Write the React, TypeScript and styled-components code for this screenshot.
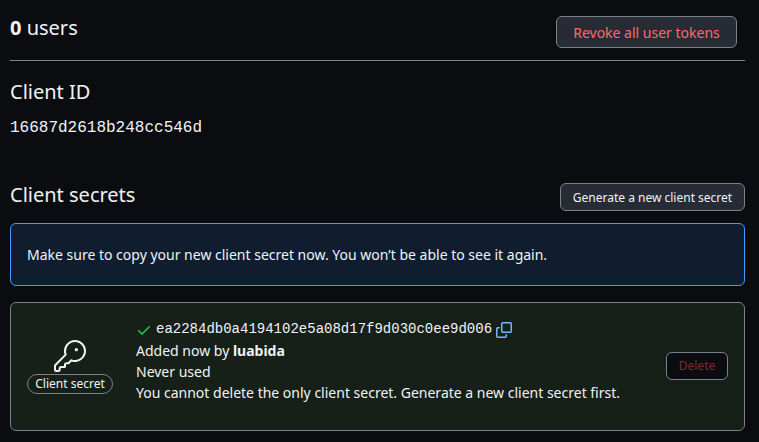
import React from "react"
import styled, {createGlobalStyle} from "styled-components"
import {GoKey} from "react-icons/go"

const GlobalStyle = createGlobalStyle`
    html, body {
        margin: 0;
        height: 100%;
        background: #0a0c10;
        color: #f0f3f6;
        font-family: "Noto Sans", sans-serif;
        font-size: 14px;
        line-height: 21px;
        overflow: hidden;
    }
`

const CHECK = "M13.78 4.22a.75.75 0 0 1 0 1.06l-7.25 7.25a.75.75 0 0 1-1.06 0L2.22 9.28a.751.751 0 0 1 .018-1.042.751.751 0 0 1 1.042-.018L6 10.94l6.72-6.72a.75.75 0 0 1 1.06 0Z"
const COPY_A = "M0 6.75C0 5.784.784 5 1.75 5h1.5a.75.75 0 0 1 0 1.5h-1.5a.25.25 0 0 0-.25.25v7.5c0 .138.112.25.25.25h7.5a.25.25 0 0 0 .25-.25v-1.5a.75.75 0 0 1 1.5 0v1.5A1.75 1.75 0 0 1 9.25 16h-7.5A1.75 1.75 0 0 1 0 14.25Z"
const COPY_B = "M5 1.75C5 .784 5.784 0 6.75 0h7.5C15.216 0 16 .784 16 1.75v7.5A1.75 1.75 0 0 1 14.25 11h-7.5A1.75 1.75 0 0 1 5 9.25Zm1.75-.25a.25.25 0 0 0-.25.25v7.5c0 .138.112.25.25.25h7.5a.25.25 0 0 0 .25-.25v-7.5a.25.25 0 0 0-.25-.25Z"

export default function App() {
    return (<Page>
        <GlobalStyle/>
        <UsersRow>
            <Heading><strong>0</strong> users</Heading>
            <RevokeButton>Revoke all user tokens</RevokeButton>
        </UsersRow>
        <ClientId>
            <Heading>Client ID</Heading>
            <IdCode>16687d2618b248cc546d</IdCode>
        </ClientId>
        <SecretsRow>
            <SecretsHeading>Client secrets</SecretsHeading>
            <SmallButton>Generate a new client secret</SmallButton>
        </SecretsRow>
        <Flash>Make sure to copy your new client secret now. You won’t be able to see it again.</Flash>
        <SecretCard>
            <KeyColumn>
                <GoKey size={32} color="#f0f3f6"/>
                <Label>Client secret</Label>
            </KeyColumn>
            <Details>
                <TokenLine>
                    <svg width="16" height="16" viewBox="0 0 16 16" fill="#26cd4d"><path d={CHECK}/></svg>
                    <Token>ea2284db0a4194102e5a08d17f9d030c0ee9d006</Token>
                    <svg width="16" height="16" viewBox="0 0 16 16" fill="#71b7ff"><path d={COPY_A}/><path d={COPY_B}/></svg>
                </TokenLine>
                <div>Added now by <strong>luabida</strong></div>
                <div>Never used</div>
                <div>You cannot delete the only client secret. Generate a new client secret first.</div>
            </Details>
            <DeleteButton>Delete</DeleteButton>
        </SecretCard>
    </Page>);
}

const Page = styled.div`
    display: flex;
    flex-direction: column;
    width: 735px;
    padding: 16px 14px 0 10px;
`

const UsersRow = styled.div`
    display: flex;
    justify-content: space-between;
    align-items: flex-start;
    height: 44px;
    padding-right: 8px;
    border-bottom: 1px solid #7a828e;
`

const Heading = styled.h3`
    margin: 0;
    font-size: 20px;
    line-height: 24px;
    font-weight: 400;
    strong {
        font-weight: 700;
    }
`

const SecretsHeading = styled(Heading)`
    margin-bottom: 4px;
`

const Button = styled.button`
    font-family: inherit;
    border: 1px solid #7a828e;
    border-radius: 6px;
    background: #272b33;
    color: #f0f3f6;
    padding: 0;
    white-space: nowrap;
`

const RevokeButton = styled(Button)`
    width: 181px;
    height: 32px;
    font-size: 14px;
    color: #ff6a69;
`

const SmallButton = styled(Button)`
    width: 185px;
    height: 28px;
    font-size: 12px;
`

const ClientId = styled.div`
    margin-top: 19px;
`

const IdCode = styled.code`
    display: block;
    margin-top: 12px;
    font-family: "Liberation Mono", monospace;
    font-size: 16px;
    line-height: 24px;
`

const SecretsRow = styled.div`
    display: flex;
    justify-content: space-between;
    align-items: center;
    margin-top: 43px;
    height: 28px;
`

const Flash = styled.div`
    margin-top: 12px;
    height: 63px;
    box-sizing: border-box;
    padding: 20px 16px;
    border: 1px solid #409eff;
    border-radius: 6px;
    background: #0f1d2e;
`

const SecretCard = styled.div`
    display: flex;
    align-items: center;
    box-sizing: border-box;
    height: 129px;
    margin-top: 16px;
    padding: 0 16px;
    border: 1px solid #7a828e;
    border-radius: 6px;
    background: #162019;
`

const KeyColumn = styled.div`
    display: flex;
    flex-direction: column;
    align-items: center;
    width: 86px;
    margin-right: 23px;
    svg {
        margin-bottom: 2px;
    }
`

const Label = styled.span`
    box-sizing: border-box;
    height: 20px;
    padding: 0 7px;
    border: 1px solid #7a828e;
    border-radius: 2em;
    font-size: 12px;
    line-height: 18px;
    white-space: nowrap;
`

const Details = styled.div`
    flex: 1;
    padding-bottom: 11px;
`

const TokenLine = styled.div`
    display: flex;
    align-items: center;
    gap: 4px;
    height: 20px;
`

const Token = styled.code`
    font-family: "Liberation Mono", monospace;
    font-size: 14px;
    line-height: 21px;
`

const DeleteButton = styled(Button)`
    width: 62px;
    height: 28px;
    margin-left: auto;
    margin-bottom: 1px;
    padding-bottom: 2px;
    font-size: 12px;
    background: #0a0c10;
    color: #7c2c2e;
`
